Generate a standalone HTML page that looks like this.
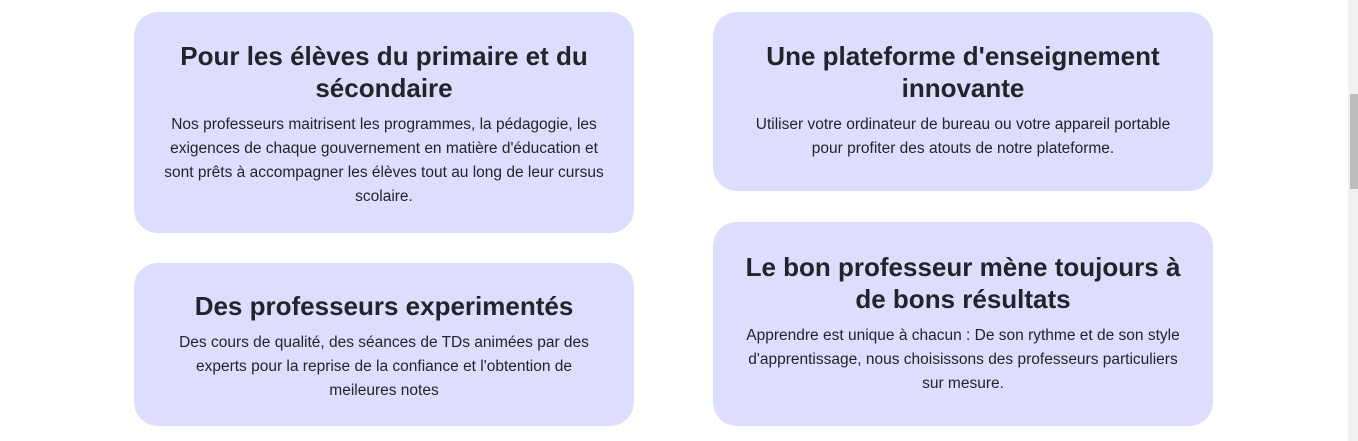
<!DOCTYPE html>
<html><head><meta charset="utf-8"><style>
html,body{margin:0;padding:0;width:1358px;height:441px;overflow:hidden;background:#fff;font-family:"Liberation Sans",sans-serif;color:#212529}
.c{position:absolute;width:500px;background:#dddefe;border-radius:24px;box-sizing:border-box;padding:0 10px;text-align:center}
.c h2{margin:0;font-size:26px;font-weight:600;line-height:32px}
.c p{margin:9px 0 0;font-size:15.5px;line-height:24px;white-space:nowrap}
.sb{position:absolute;left:1348px;top:0;width:10px;height:441px;background:#f0f0f0}
.th{position:absolute;left:1350px;top:94px;width:8px;height:95px;background:#bdbdbd}
</style></head><body>
<div class="c" style="left:134px;top:12px;height:221px;padding-top:28px">
<h2>Pour les élèves du primaire et du sécondaire</h2>
<p>Nos professeurs maitrisent les programmes, la pédagogie, les<br>exigences de chaque gouvernement en matière d'éducation et<br>sont prêts à accompagner les élèves tout au long de leur cursus<br>scolaire.</p></div>
<div class="c" style="left:713px;top:12px;height:179px;padding-top:28px">
<h2>Une plateforme d'enseignement innovante</h2>
<p>Utiliser votre ordinateur de bureau ou votre appareil portable<br>pour profiter des atouts de notre plateforme.</p></div>
<div class="c" style="left:134px;top:263px;height:163px;padding-top:27px">
<h2>Des professeurs experimentés</h2>
<p>Des cours de qualité, des séances de TDs animées par des<br>experts pour la reprise de la confiance et l'obtention de<br>meileures notes</p></div>
<div class="c" style="left:713px;top:222px;height:204px;padding-top:29px">
<h2>Le bon professeur mène toujours à<br>de bons résultats</h2>
<p>Apprendre est unique à chacun : De son rythme et de son style<br>d'apprentissage, nous choisissons des professeurs particuliers<br>sur mesure.</p></div>
<div class="sb"></div><div class="th"></div>
</body></html>
